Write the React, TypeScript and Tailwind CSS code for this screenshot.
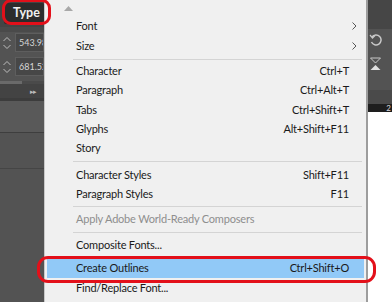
import React from 'react';

type Item =
  | { kind: 'item'; label: string; shortcut?: string; submenu?: boolean; disabled?: boolean; active?: boolean; h: number }
  | { kind: 'sep'; h: number };

const items: Item[] = [
  { kind: 'item', label: 'Font', submenu: true, h: 20 },
  { kind: 'item', label: 'Size', submenu: true, h: 20 },
  { kind: 'sep', h: 6 },
  { kind: 'item', label: 'Character', shortcut: 'Ctrl+T', h: 19 },
  { kind: 'item', label: 'Paragraph', shortcut: 'Ctrl+Alt+T', h: 19 },
  { kind: 'item', label: 'Tabs', shortcut: 'Ctrl+Shift+T', h: 20 },
  { kind: 'item', label: 'Glyphs', shortcut: 'Alt+Shift+F11', h: 19 },
  { kind: 'item', label: 'Story', h: 19 },
  { kind: 'sep', h: 7 },
  { kind: 'item', label: 'Character Styles', shortcut: 'Shift+F11', h: 20 },
  { kind: 'item', label: 'Paragraph Styles', shortcut: 'F11', h: 19 },
  { kind: 'sep', h: 5 },
  { kind: 'item', label: 'Apply Adobe World-Ready Composers', disabled: true, h: 20 },
  { kind: 'sep', h: 6 },
  { kind: 'item', label: 'Composite Fonts...', h: 20 },
  { kind: 'sep', h: 3 },
  { kind: 'item', label: 'Create Outlines', shortcut: 'Ctrl+Shift+O', active: true, h: 20 },
  { kind: 'item', label: 'Find/Replace Font...', h: 20 },
];

const Spinner: React.FC<{ value: string }> = ({ value }) => (
  <div className="flex items-center h-[19px]">
    <svg width="12" height="16" viewBox="0 0 12 16" className="ml-[1px] shrink-0">
      <path d="M2.5 6 L6 2.5 L9.5 6" fill="none" stroke="#bdbdbd" strokeWidth="1" />
      <path d="M2.5 10 L6 13.5 L9.5 10" fill="none" stroke="#bdbdbd" strokeWidth="1" />
    </svg>
    <div className="ml-[2px] flex-1 h-[19px] bg-[#474747] border border-[#5e5e5e] flex items-center pl-[3px] text-[9px] text-[#d6d6d6] overflow-hidden whitespace-nowrap">
      {value}
    </div>
  </div>
);

export default function App() {
  return (
    <div
      className="relative w-[392px] h-[302px] overflow-hidden flex bg-[#535353]"
      style={{ fontFamily: 'Lato, "Noto Sans", sans-serif' }}
    >
      {/* left panel */}
      <div className="w-[44px] shrink-0 flex flex-col">
        <div className="h-[27px] bg-[#444444] flex items-start pt-[3px] pl-[4px]">
          <div className="w-[44px] h-[21px] bg-[#2c2c2c] rounded-[2px] flex items-center pl-[9px] text-[12.5px] font-bold text-[#f0f0f0]">
            Type
          </div>
        </div>
        <div className="h-[5px] bg-[#4a4a4a]" />
        <div className="flex flex-col gap-[5px] bg-[#535353] py-[1px]">
          <Spinner value="543.984" />
          <Spinner value="681.524" />
        </div>
        <div className="h-[4px] bg-[#535353]" />
        <div className="h-[3px] flex">
          <div className="w-[22px] bg-[#6a6a6a]" />
          <div className="flex-1 bg-[#4a4a4a]" />
        </div>
        <div className="h-[14px] bg-[#434343] flex items-center justify-end pr-[8px] text-[7px] text-[#bdbdbd] tracking-[-1px]">
          ▸▸
        </div>
        <div className="h-[3px] bg-[#3c3c3c]" />
        <div className="h-[31px] bg-[#595959]" />
        <div className="h-[1px] bg-[#3e3e3e]" />
        <div className="h-[35px] bg-[#535353]" />
        <div className="h-[1px] bg-[#454545]" />
        <div className="flex-1 bg-[#535353]" />
      </div>

      {/* menu */}
      <div className="w-[324px] shrink-0 bg-[#f0f0f0] border-l border-[#c8c8c8] border-r-2 border-r-[#9d9d9d] flex flex-col text-[11px] tracking-[-0.2px] text-[#1a1a1a] px-[2px]">
        <div className="h-[16px] flex items-center pl-[17px]">
          <svg width="9" height="5" viewBox="0 0 9 5">
            <path d="M0 5 L4.5 0 L9 5 Z" fill="#a8a8a8" />
          </svg>
        </div>
        {items.map((it, i) =>
          it.kind === 'sep' ? (
            <div key={i} className="flex items-center pl-[26px] pr-[2px]" style={{ height: it.h }}>
              <div className="w-full h-[1px] bg-[#d4d4d4]" />
            </div>
          ) : (
            <div
              key={i}
              className={`flex items-center pl-[29px] pr-[15px] ${it.active ? 'bg-[#91c9f7]' : ''} ${it.disabled ? 'text-[#8e8e8e]' : ''}`}
              style={{ height: it.h }}
            >
              <span className="flex-1 whitespace-nowrap">{it.label}</span>
              {it.shortcut && <span className="whitespace-nowrap">{it.shortcut}</span>}
              {it.submenu && (
                <svg width="5" height="8" viewBox="0 0 5 8" className="-mr-[8px]">
                  <path d="M0.5 0.5 L4 4 L0.5 7.5" fill="none" stroke="#555" strokeWidth="1" />
                </svg>
              )}
            </div>
          )
        )}
      </div>

      {/* right panel */}
      <div className="flex-1 flex flex-col">
        <div className="h-[29px] bg-[#464646]" />
        <div className="h-[61px] bg-[#535353] flex flex-col items-start pl-[1px] pt-[4px] gap-[10px]">
          <svg width="13" height="14" viewBox="0 0 13 14">
            <path d="M3 4 A5 5 0 1 1 2.5 9" fill="none" stroke="#c8c8c8" strokeWidth="1.5" />
            <path d="M1 2 L3.5 5 L6 2.5" fill="none" stroke="#c8c8c8" strokeWidth="1.2" />
          </svg>
          <svg width="13" height="14" viewBox="0 0 13 14">
            <path d="M1.5 1 H11.5 L6.5 6 Z" fill="none" stroke="#c8c8c8" strokeWidth="1" />
            <path d="M1.5 13 H11.5 L6.5 8 Z" fill="#e0e0e0" />
          </svg>
        </div>
        <div className="h-[14px] bg-[#4a4a4a]" />
        <div className="h-[8px] bg-[#1e1e1e] flex items-center justify-end pr-[1px] text-[8px] text-[#ddd] leading-none">
          2
        </div>
        <div className="flex-1 bg-white" />
      </div>

      {/* red annotation outlines */}
      <div className="absolute left-[2px] top-[-1px] w-[49px] h-[26px] border-[3px] border-[#e3101a] rounded-[9px]" />
      <div className="absolute left-[37px] top-[256px] w-[339px] h-[27px] border-[3px] border-[#e3101a] rounded-[11px]" />
    </div>
  );
}
